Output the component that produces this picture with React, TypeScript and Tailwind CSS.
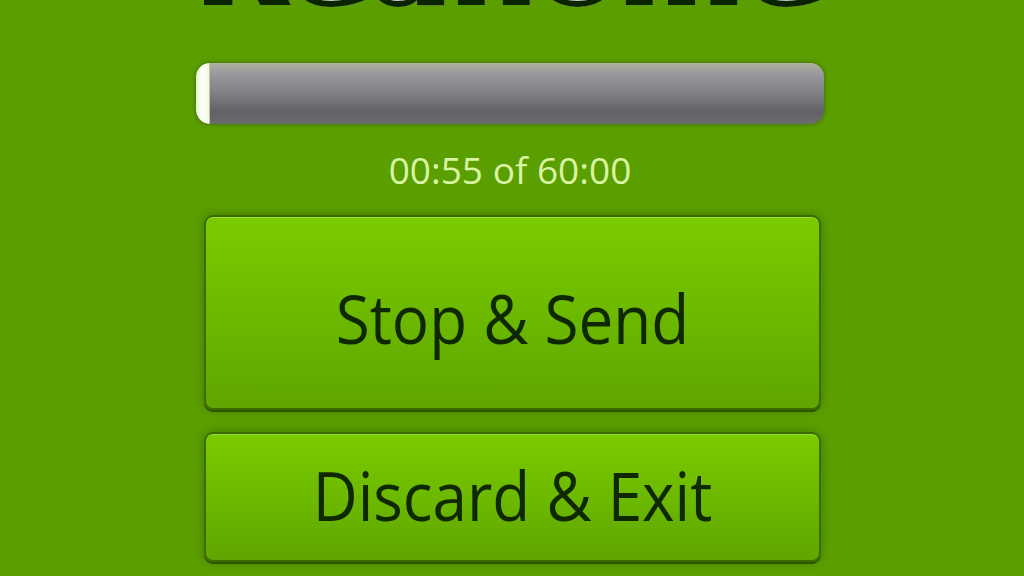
export default function App() {
  return (
    <div className="w-[1024px] h-[576px] overflow-hidden bg-[#5a9e00] font-['Open_Sans',sans-serif]">
      <div className="flex flex-col w-[628px] ml-[196px]">
        <div className="-mt-[99px] h-[120px] pr-[14px] text-center leading-none text-[120px] font-bold font-['DejaVu_Sans',sans-serif] whitespace-nowrap">
          <span className="text-transparent bg-clip-text bg-gradient-to-b from-[#ffffff] via-[#e6ece0] to-[#b4beb0] [-webkit-text-stroke:6px_#0b2400] [paint-order:stroke_fill]">
            Reahome
          </span>
        </div>
        <div className="mt-[42px] h-[61px] rounded-[14px] flex overflow-hidden bg-[linear-gradient(to_bottom,#aeb1a0_0%,#96969c_20%,#808086_48%,#626266_80%,#6c6c6e_100%)] shadow-[0_0_4px_rgba(40,60,20,0.6)]">
          <div className="w-[14px] h-full rounded-l-[14px] bg-gradient-to-r from-[#e6f5c4] via-[#ffffff] to-[#f2fbd9] border-r border-[#b8c8a0]" />
        </div>
        <div className="mt-[27px] h-[37px] text-center text-[37px] leading-none text-[#d7f5a2]">
          00:55 of 60:00
        </div>
        <button className="mt-[27px] ml-[8px] w-[617px] h-[195px] rounded-[9px] border-2 border-[#3c6c00] bg-gradient-to-b from-[#7bcb00] via-[#6cb900] to-[#5fa600] shadow-[0_2px_0_#2d5500,inset_0_1px_0_#98de3a,0_0_8px_rgba(20,50,0,0.35)] flex items-center justify-center pt-[11px]">
          <span className="block text-[62px] leading-none text-[#0f2800] scale-y-110">Stop &amp; Send</span>
        </button>
        <button className="mt-[22px] ml-[8px] w-[617px] h-[130px] rounded-[9px] border-2 border-[#3c6c00] bg-gradient-to-b from-[#7bcb00] via-[#6cb900] to-[#5fa600] shadow-[0_2px_0_#2d5500,inset_0_1px_0_#98de3a,0_0_8px_rgba(20,50,0,0.35)] flex items-center justify-center pb-[4px]">
          <span className="block text-[62px] leading-none text-[#0f2800] scale-y-110">Discard &amp; Exit</span>
        </button>
      </div>
    </div>
  );
}
